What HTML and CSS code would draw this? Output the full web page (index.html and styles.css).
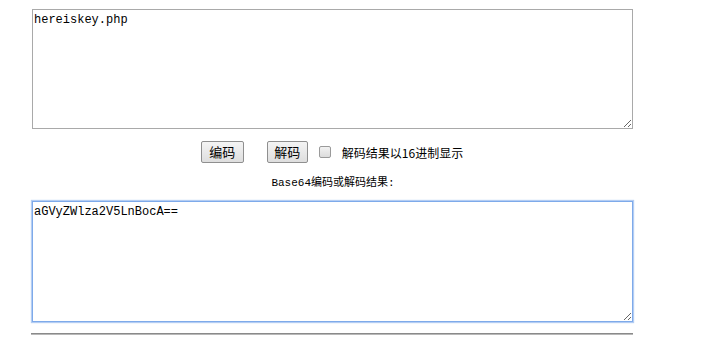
FILE: index.html
```html
<!DOCTYPE html>
<html lang="zh-CN">

<head>
    <meta charset="UTF-8">
    <title>Base64编码解码</title>
    <link rel="stylesheet" href="styles.css">
</head>

<body>
    <div class="wrap">
        <textarea class="box" id="src">hereiskey.php</textarea>
        <div class="actions">
            <button class="btn btn-enc">编码</button>
            <button class="btn btn-dec">解码</button>
            <label class="hex"><span class="check"></span>解码结果以16进制显示</label>
        </div>
        <div class="result-title">Base64编码或解码结果:</div>
        <textarea class="box box-focus" id="dst">aGVyZWlza2V5LnBocA==</textarea>
        <hr class="line">
    </div>
</body>

</html>
```

FILE: styles.css
```css
body {
    margin: 0;
    padding-top: 9px;
    background: #ffffff;
    font-family: "Liberation Sans", "Noto Sans CJK SC", sans-serif;
    color: #000;
}

.wrap {
    width: 650px;
    margin-left: 8px;
    text-align: center;
}

.box {
    display: block;
    box-sizing: border-box;
    width: 601px;
    height: 120px;
    margin: 0 0 0 24px;
    padding: 3px 1px;
    border: 1px solid #a9a9a9;
    font-family: "Liberation Mono", "Noto Sans CJK SC", monospace;
    font-size: 12px;
    line-height: 14px;
    text-align: left;
    resize: both;
    outline: none;
}

.box-focus {
    height: 121px;
    border-color: #7eaaea;
    box-shadow: 0 0 1px 1px #b4cdf3;
}

.actions {
    display: flex;
    justify-content: center;
    align-items: center;
    height: 22px;
    margin-top: 12px;
    padding-right: 2px;
}

.btn {
    height: 22px;
    padding: 0 6px;
    border: 1px solid #8f8f8f;
    border-radius: 2px;
    background: linear-gradient(#f4f4f4, #dedede);
    font-family: "Noto Sans CJK SC", sans-serif;
    font-size: 13px;
    line-height: 20px;
    color: #000;
}

.btn-enc {
    width: 43px;
}

.btn-dec {
    width: 41px;
    margin-left: 23px;
}

.hex {
    display: flex;
    align-items: center;
    margin-left: 11px;
    font-family: "Noto Sans CJK SC", sans-serif;
    font-size: 12px;
}

.check {
    width: 10px;
    height: 10px;
    margin-right: 11px;
    border: 1px solid #9a9a9a;
    border-radius: 2px;
    background: linear-gradient(#f2f2f2, #dcdcdc);
}

.result-title {
    margin-top: 13px;
    margin-bottom: 11px;
    height: 14px;
    line-height: 14px;
    font-family: "Liberation Mono", "Noto Sans CJK SC", monospace;
    font-size: 11px;
}

.line {
    width: 602px;
    height: 0;
    margin: 11px 0 0 23px;
    border: none;
    border-top: 1px solid #8a8a8a;
    border-bottom: 1px solid #b8b8b8;
}
```
